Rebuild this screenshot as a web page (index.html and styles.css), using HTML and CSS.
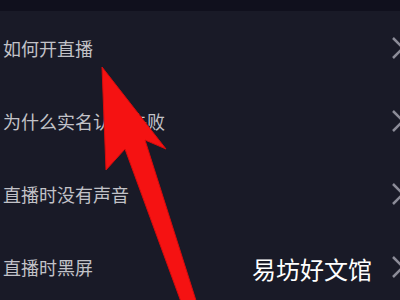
FILE: index.html
```html
<html>
  <head>
    <link rel="stylesheet" href="styles.css">
  </head>
  <body>
    <div class="topbar"></div>
    <ul class="faq">
      <li class="row"><span>如何开直播</span><svg class="chev" width="8" height="24" viewBox="0 0 8 24"><path d="M1 2 L11 12 L1 22"/></svg></li>
      <li class="row"><span>为什么实名认证失败</span><svg class="chev" width="8" height="24" viewBox="0 0 8 24"><path d="M1 2 L11 12 L1 22"/></svg></li>
      <li class="row"><span>直播时没有声音</span><svg class="chev" width="8" height="24" viewBox="0 0 8 24"><path d="M1 2 L11 12 L1 22"/></svg></li>
      <li class="row"><span>直播时黑屏</span><svg class="chev" width="8" height="24" viewBox="0 0 8 24"><path d="M1 2 L11 12 L1 22"/></svg></li>
    </ul>
    <svg class="arrow" width="400" height="300" viewBox="0 0 400 300">
      <polygon points="102,67 166,149 145,140 199,310 184,310 125,149 106,170"/>
    </svg>
    <div class="mark">易坊好文馆</div>
  </body>
</html>
```

FILE: styles.css
```css
html {
  background: #191a27;
}
body {
  margin: 0;
  width: 400px;
  height: 300px;
  overflow: hidden;
  position: relative;
  font-family: "Noto Sans CJK SC", "Noto Sans", sans-serif;
}
.topbar {
  height: 11px;
  background: #10101d;
}
.faq {
  list-style: none;
  margin: 0;
  padding: 0;
}
.row {
  height: 73px;
  display: flex;
  align-items: center;
  justify-content: space-between;
  padding-left: 3px;
  font-size: 18px;
  color: #c2c2c8;
}
.chev {
  display: block;
}
.chev path {
  fill: none;
  stroke: #8c8c98;
  stroke-width: 2.5;
}
.arrow {
  position: absolute;
  top: 0;
  left: 0;
}
.arrow polygon {
  fill: #f51212;
  stroke: #d40c0c;
  stroke-width: 1;
  stroke-linejoin: round;
}
.mark {
  position: absolute;
  top: 251px;
  right: 28px;
  font-size: 24px;
  color: #ffffff;
}
```
